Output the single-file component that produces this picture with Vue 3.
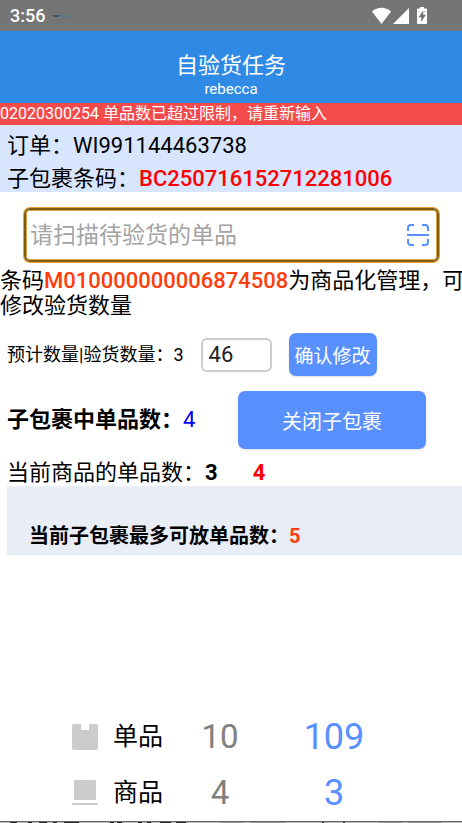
<script setup>
import { ref } from 'vue'

const scanCode = ref('')
const quantity = ref('46')
const totals = [
  { id: 'piece', label: '单品', done: 10, total: 109 },
  { id: 'goods', label: '商品', done: 4, total: 3 },
]
</script>

<template>
  <div class="screen">
    <div class="status">
      <span class="clock">3:56</span>
      <svg class="notice" viewBox="0 0 20 4" aria-hidden="true">
        <path d="M1 1l1.500 2L4 1l1.500 2L7 1" fill="none" stroke="#27364f" />
        <path d="M8 2h4M13 2h2" stroke="#3f76b5" />
        <path d="M16 1v2h2" fill="none" stroke="#3f76b5" />
        <path d="M18 1h1" stroke="#55b54a" />
      </svg>
      <svg class="system" viewBox="0 0 56 18" aria-hidden="true">
        <path d="M0 4.500C5.500-.4 13.500-.4 19 4.500L9.500 17z" fill="#fff" />
        <path d="M37 1v16H21z" fill="#fff" />
        <path d="M48 0h4v1.500h2q1 0 1 1V16q0 1-1 1h-8q-1 0-1-1V2.500q0-1 1-1h2z" fill="#fff" />
        <path d="M51 4l-4 6h2.500v4l4-6H51zM46.500 4.500h1.500M52 4.500h1.500" fill="#757575" stroke="#757575" stroke-width=".5" />
      </svg>
    </div>

    <header class="header">
      <h1>自验货任务</h1>
      <span>rebecca</span>
    </header>
    <div class="alert" role="alert">02020300254 单品数已超过限制，请重新输入</div>

    <section class="order">
      <div>订单：WI991144463738</div>
      <div>子包裹条码：<b>BC250716152712281006</b></div>
    </section>

    <div class="scan">
      <input v-model="scanCode" type="text" placeholder="请扫描待验货的单品" aria-label="请扫描待验货的单品" />
      <button class="scan-button" type="button" aria-label="扫描">
        <svg viewBox="0 0 22 22" fill="none" stroke="#5890ff" stroke-width="2" aria-hidden="true">
          <path d="M1 7V4q0-3 3-3h3M15 1h3q3 0 3 3v3M21 15v3q0 3-3 3h-3M7 21H4q-3 0-3-3v-3M0 11h22" />
        </svg>
      </button>
    </div>

    <p class="message">条码<b>M010000000006874508</b>为商品化管理，可修改验货数量</p>

    <div class="quantity">
      <label for="quantity">预计数量|验货数量：3</label>
      <input id="quantity" v-model="quantity" type="text" inputmode="numeric" />
      <button class="primary" type="button">确认修改</button>
    </div>

    <div class="parcel">
      <div class="parcel-count"><b>子包裹中单品数：</b><span>4</span></div>
      <button class="primary" type="button">关闭子包裹</button>
    </div>

    <div class="current">
      <span>当前商品的单品数：<b>3</b></span>
      <b class="limit">4</b>
    </div>
    <div class="capacity">当前子包裹最多可放单品数：<span>5</span></div>

    <footer class="totals">
      <div v-for="row in totals" :key="row.id" class="total-row">
        <svg v-if="row.id === 'piece'" class="kind" viewBox="0 0 26 26" fill="#ccc" aria-hidden="true">
          <path d="M2 0h7v6h8V0h7q2 0 2 2v22q0 2-2 2H2q-2 0-2-2V2q0-2 2-2z" />
        </svg>
        <svg v-else class="kind" viewBox="0 0 26 26" fill="#ccc" aria-hidden="true">
          <rect x="2" width="22" height="20" rx="1" />
          <rect y="23" width="26" height="2" rx="1" />
        </svg>
        <span class="name">{{ row.label }}</span>
        <span class="done">{{ row.done }}</span>
        <span class="total">{{ row.total }}</span>
      </div>
    </footer>
    <svg class="edge" viewBox="0 0 462 2" preserveAspectRatio="none" aria-hidden="true">
      <path d="M0 .5h462" stroke="#666" />
      <path d="M0 1.500h462" stroke="#bbb" />
      <path d="M10 1.500h7M28 1.500h4M39 1.500h8M53 1.500h4M64 1.500h15M110 1.500h4M117 1.500h5M138 1.500h4M147 1.500h4M160 1.500h11M176 1.500h10M322 1.500h2M343 1.500h2" stroke="#222" />
      <path d="M220 1.500h24M250 1.500h36M379 1.500h24M408 1.500h34" stroke="#999" />
    </svg>
  </div>
</template>

<style>
body {
  background: #fff;
}
</style>

<style scoped>
.screen {
  display: flex;
  flex-direction: column;
  min-height: 100vh;
  overflow: hidden;
  color: #000;
  font: 22px/26px Roboto, "Noto Sans CJK SC", sans-serif;
}
.screen * {
  box-sizing: border-box;
}
input,
button {
  margin: 0;
  font-family: inherit;
}
.status {
  display: flex;
  align-items: center;
  height: 31px;
  padding: 0 34px 0 10px;
  background: #757575;
}
.clock {
  color: #fff;
  font-size: 18px;
  font-weight: 500;
}
.notice {
  width: 20px;
  height: 4px;
  margin-left: 7px;
}
.system {
  width: 56px;
  height: 18px;
  margin-left: auto;
}
.header {
  display: flex;
  flex-direction: column;
  align-items: center;
  padding: 21px 0 5px;
  background: #2f8ae6;
  color: #fff;
}
.header h1 {
  margin: 0;
  font-size: 22px;
  font-weight: 400;
  line-height: 28px;
}
.header span {
  font-size: 15px;
  line-height: 18px;
}
.alert {
  background: #f34b4b;
  color: #fff;
  font-size: 16px;
  line-height: 22px;
}
.order {
  display: flex;
  flex-direction: column;
  gap: 7px;
  padding: 8px 7px 0;
  background: #d8e5ff;
}
.order b {
  color: #f00;
  font-weight: 500;
}
.scan {
  display: flex;
  align-items: center;
  margin: 16px 23px 0 24px;
  padding: 0 8px 0 4px;
  border: 2px solid #7f5b16;
  border-radius: 6px;
  box-shadow: 0 0 0 1px #e2a533, inset 0 0 0 1px #dba744;
}
.scan input {
  flex: 1;
  min-width: 0;
  height: 50px;
  padding: 0;
  border: 0;
  outline: 0;
  background: none;
  font-size: 23px;
}
.scan input::placeholder {
  color: #a3a3a3;
  opacity: 1;
}
.scan-button {
  display: flex;
  padding: 0;
  border: 0;
  background: none;
}
.scan-button svg {
  width: 22px;
  height: 22px;
}
.message {
  margin: 6px -4px 0 0;
  line-height: 25px;
}
.message b {
  color: #ff3c0a;
  font-weight: 500;
}
.quantity {
  display: flex;
  align-items: center;
  margin-top: 15px;
  padding-left: 7px;
  font-size: 18px;
}
.quantity input {
  width: 71px;
  height: 34px;
  margin: 0 17px;
  padding: 0 6px;
  border: 2px solid #ccc;
  border-radius: 6px;
  background: #fff;
  color: #222;
  font-size: 22px;
}
.primary {
  border: 0;
  border-radius: 7px;
  background: #5890ff;
  color: #fff;
  box-shadow: 0 1px 2px #0002;
}
.quantity .primary {
  height: 43px;
  padding: 0 6px;
  font-size: 19px;
}
.parcel {
  display: flex;
  align-items: center;
  justify-content: space-between;
  margin-top: 15px;
  padding: 0 36px 0 7px;
}
.parcel-count span {
  color: #00f;
}
.parcel .primary {
  width: 188px;
  height: 58px;
  font-size: 20px;
}
.current {
  display: flex;
  gap: 35px;
  margin-top: 11px;
  padding-left: 7px;
}
.limit {
  color: #f00;
}
.capacity {
  margin: 0 0 0 7px;
  padding: 37px 22px 6px;
  background: #e9edf5;
  font-size: 20px;
  font-weight: 700;
}
.capacity span {
  color: #ff3c0a;
}
.totals {
  margin-top: auto;
}
.total-row {
  display: grid;
  grid-template-columns: 26px 79px 86px 142px;
  align-items: center;
  height: 56px;
  padding-left: 72px;
}
.kind {
  width: 26px;
  height: 26px;
}
.name {
  padding-left: 15px;
  font-size: 25px;
  white-space: nowrap;
}
.done,
.total {
  text-align: center;
}
.done {
  color: #808080;
  font-size: 33px;
}
.total {
  color: #5890ff;
  font-size: 36px;
}
.edge {
  display: block;
  width: 100%;
  height: 2px;
}
</style>
